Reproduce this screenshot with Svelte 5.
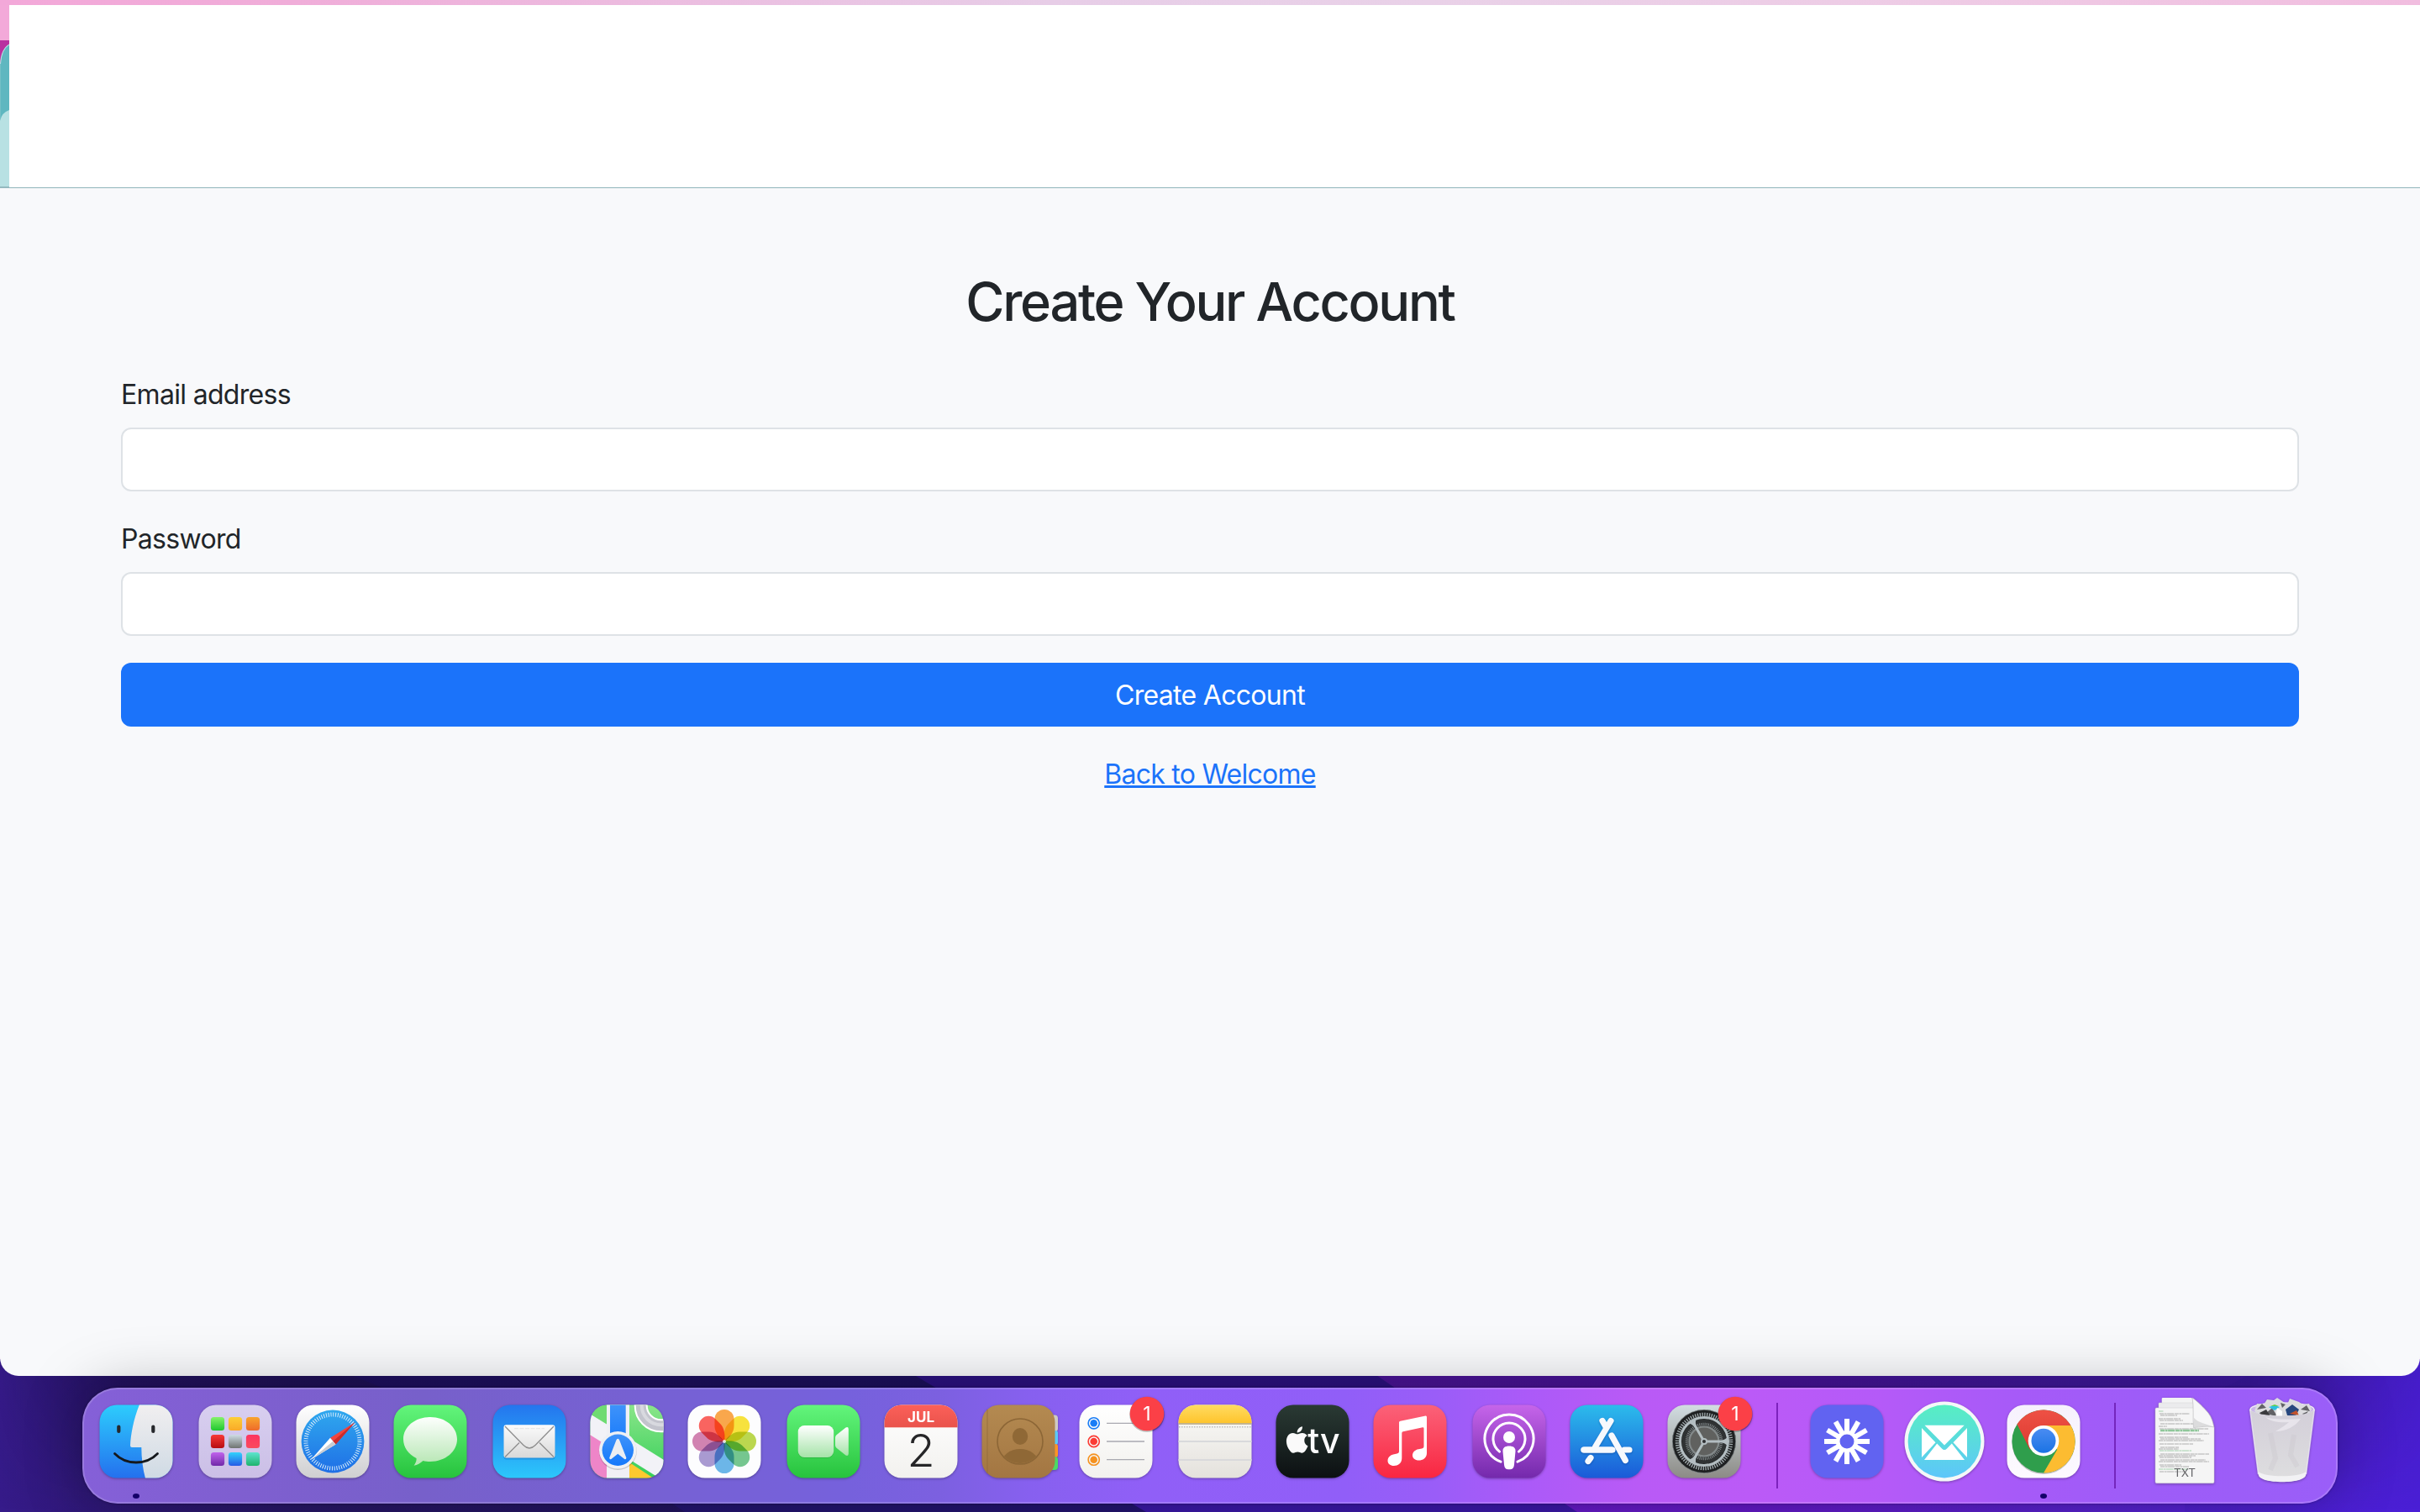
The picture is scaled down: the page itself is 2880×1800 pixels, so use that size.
<script>
  // wide: two extra pixels of spacing after the item
  const items = [
    { id: 'finder', wide: true, running: true },
    { id: 'launchpad' },
    { id: 'safari' },
    { id: 'messages', wide: true },
    { id: 'mail' },
    { id: 'maps' },
    { id: 'photos', wide: true },
    { id: 'facetime' },
    { id: 'calendar' },
    { id: 'contacts' },
    { id: 'reminders', wide: true, badge: 1 },
    { id: 'notes' },
    { id: 'tv' },
    { id: 'music', wide: true },
    { id: 'podcasts' },
    { id: 'appstore' },
    { id: 'settings', badge: 1 },
    { id: 'separator' },
    { id: 'loom' },
    { id: 'mailbird', wide: true },
    { id: 'chrome', running: true },
    { id: 'separator', narrow: true },
    { id: 'txt' },
    { id: 'trash' },
  ];

  const gradients = [
    ['blueFinder', '#2dcdfd', '#2470ee'], ['whiteFinder', '#f1eff0', '#cfdae4'],
    ['pad', '#d8cff0', '#cbbfe6'], ['safariBg', '#ffffff', '#cfcfd1'],
    ['safariDial', '#2fa8ee', '#1f6fe6'], ['green', '#63f57c', '#27c33d'],
    ['bubble', '#fdfffd', '#b5e6b2'], ['mailBg', '#2475ee', '#2cc7fb'],
    ['paper', '#fbfbfb', '#d9d9d9'], ['mapGreen', '#8be58a', '#35cf58'],
    ['mapBlue', '#3f93fa', '#1478fb'], ['camera', '#ffffff', '#a5e3a8'],
    ['calRed', '#fc605a', '#e9534b'], ['calBg', '#ffffff', '#f2f1ee'],
    ['leather', '#b48a51', '#a37642'], ['noteTop', '#ffdc63', '#fec42c'],
    ['noteBg', '#fcfcfa', '#e4e1dc'], ['tvBg', '#2a3a34', '#0c1012'],
    ['musicBg', '#fb6279', '#f92641'], ['podBg', '#c665ea', '#7429ac'],
    ['storeBg', '#2cbcec', '#1a5ad8'], ['setBg', '#d2dde2', '#8c8b86'],
    ['birdBg', '#57efc2', '#5dc6fa'], ['chromeBg', '#f6f1fd', '#fdfaff'],
    ['cRed', '#ee5145', '#dc3a30'], ['cBlue', '#4a8cf2', '#1a73e4'],
    ['p1', '#86f26b', '#1fc72f'], ['p2', '#fdcf38', '#f9a928'], ['p3', '#f8a52d', '#ee6a2b'],
    ['p4', '#f83a37', '#b60c12'], ['p5', '#cfdde5', '#6e7270'], ['p6', '#fd3560', '#f94a5e'],
    ['p7', '#c163ec', '#7029a8'], ['p8', '#30d3fc', '#2559e6'], ['p9', '#5ee4d0', '#1eb36c'],
    ['bin', '#d3cfd9', '#dededf'],
  ];

  const petals = ['#fb9a2e', '#f8e01e', '#b2d332', '#5fbf7e', '#55ace6', '#9d8bcb', '#cc70a5', '#fb4b46'];
  const spokes = [0, 30, 60, 90, 120, 150, 180, 210, 240, 270, 300, 330];
  const tiles = [-21, 0, 21].flatMap((y, r) => [-21, 0, 21].map((x, c) => ({ x, y, fill: `url(#p${r * 3 + c + 1})` })));
  const textLines = [
    [-36, 6], [-33, 36], [-31, 20], [-27, 26], [-25, 28], [-21, 44], [-18, 10], [-15, 58], [-13, 46],
    [-9, 60], [-5, 34], [-3, 48], [-1, 54], [3, 40], [7, 22], [9, 24], [11, 38], [15, 58], [17, 44],
    [19, 38], [22, 54], [24, 60], [28, 26], [30, 34], [33, 36], [36, 30],
  ];
</script>

<div class="screen">
  <svg class="defs" width="0" height="0" aria-hidden="true">
    <defs>
      {#each gradients as [id, a, b]}
        <linearGradient {id} x1="0" y1="0" x2="0" y2="1">
          <stop offset="0" stop-color={a} /><stop offset="1" stop-color={b} />
        </linearGradient>
      {/each}
      <clipPath id="tile"><rect x="-43.5" y="-43.5" width="87" height="87" rx="20.5" /></clipPath>
      <clipPath id="face"><circle cx="2" cy="0" r="26" /></clipPath>
    </defs>
  </svg>

  <svg class="wallpaper" viewBox="0 0 2880 182" aria-hidden="true">
    <defs>
      <linearGradient id="wl" x1="0" x2="1"><stop offset="0" stop-color="#361b8a" /><stop offset=".035" stop-color="#2f1878" /><stop offset=".12" stop-color="#281768" /><stop offset=".3" stop-color="#21145e" /></linearGradient>
      <linearGradient id="wr" gradientUnits="userSpaceOnUse" x1="1640" y1="0" x2="2880" y2="0"><stop offset="0" stop-color="#6a1cc9" /><stop offset=".35" stop-color="#6419c8" /><stop offset=".7" stop-color="#5722cf" /><stop offset="1" stop-color="#4e20dc" /></linearGradient>
      <linearGradient id="shade" x1="0" x2="0" y1="0" y2="1"><stop offset="0" stop-color="#100636" stop-opacity=".42" /><stop offset=".2" stop-color="#100636" stop-opacity=".34" /><stop offset="1" stop-color="#100636" stop-opacity="0" /></linearGradient>
      <linearGradient id="sides" x1="0" x2="1"><stop offset="0" stop-color="#222" /><stop offset=".05" stop-color="#fff" /><stop offset=".93" stop-color="#fff" /><stop offset="1" stop-color="#333" /></linearGradient>
      <mask id="sideFade"><rect width="2880" height="182" fill="url(#sides)" /></mask>
    </defs>
    <rect width="2880" height="182" fill="url(#wl)" />
    <path d="M420 20 800 172 815 182H2880V20Z" fill="#271680" opacity=".55" />
    <path d="M1056 0 1347 172 1364 182H2880V0Z" fill="#3b18a8" />
    <path d="M1610 0 1862 172 1877 182H2880V0Z" fill="url(#wr)" />
    <path d="M2700 0Q2670 30 2600 50V182H2880V0Z" fill="#3a1fc0" opacity=".2" />
    <rect width="2880" height="182" fill="url(#shade)" mask="url(#sideFade)" />
  </svg>

  <main class="window">
    <div class="banner">
      <svg class="sliver" viewBox="0 0 11 218" aria-hidden="true">
        <rect width="11" height="42" fill="#f3a9d9" />
        <rect y="42" width="11" height="40" fill="#b930a0" />
        <path d="M0 70Q1 52 11 46.500V218H0Z" fill="#b9e0e3" />
        <path d="M1 70Q2 53 11 47.500V218H1Z" fill="#5fb7c0" />
        <rect y="70" width="1" height="70" fill="#74bfc6" />
        <path d="M0 138Q2 128 11 125V218H0Z" fill="#b8e1e3" />
        <rect y="216" width="11" height="2" fill="#94b9bf" />
      </svg>
    </div>
    <form class="form" onsubmit={(e) => e.preventDefault()}>
      <h1>Create Your Account</h1>
      <label for="email">Email address</label>
      <input id="email" type="email" />
      <label for="password">Password</label>
      <input id="password" type="password" />
      <button type="submit">Create Account</button>
      <a href="#welcome">Back to Welcome</a>
    </form>
  </main>

  <nav class="dock">
    {#each items as item}
      {#if item.id === 'separator'}
        <div class="separator" class:narrow={item.narrow}></div>
      {:else}
        <div class="slot" class:wide={item.wide}>
          <svg class="icon" viewBox="-58 -58 116 116" aria-hidden="true">
            {#if item.id === 'finder'}
              <g clip-path="url(#tile)">
                <rect x="-44" y="-44" width="88" height="88" fill="url(#blueFinder)" />
                <path d="M4 -44C-3 -27 -6.500 -8 -7 5Q-7 7 -5 7H6.300C6.300 20 8 33 11 44H44V-44Z" fill="url(#whiteFinder)" />
              </g>
              <path d="M-20.700 -17.500V-12M20.300 -17.500V-12" stroke="#26282c" stroke-width="4.200" stroke-linecap="round" />
              <path d="M-25.500 14.500C-12 28.500 12 28.500 25.500 14.500" fill="none" stroke="#15181d" stroke-width="2.800" stroke-linecap="round" />
            {:else if item.id === 'launchpad'}
              <rect x="-43.500" y="-43.500" width="87" height="87" rx="20.500" fill="url(#pad)" />
              {#each tiles as t}
                <rect x={t.x - 8.1} y={t.y - 8.1} width="16.200" height="16.200" rx="3.500" fill={t.fill} />
              {/each}
            {:else if item.id === 'safari'}
              <rect x="-43.500" y="-43.500" width="87" height="87" rx="20.500" fill="url(#safariBg)" />
              <circle r="37.400" fill="url(#safariDial)" />
              <circle r="32" fill="none" stroke="#d8ecfb" stroke-width="5" stroke-dasharray="1 1.793" />
              <path d="M26.500 -22.800 -3 -4.300 3.500 3.500Z" fill="#f2443f" />
              <path d="M26.500 -22.800 0 0 3.500 3.500Z" fill="#c92c2c" />
              <path d="M-26 21.800 -3 -4.300 3.500 3.500Z" fill="#ffffff" />
              <path d="M-26 21.800 0 0 3.500 3.500Z" fill="#c9ccd2" />
            {:else if item.id === 'messages'}
              <rect x="-43.500" y="-43.500" width="87" height="87" rx="20.500" fill="url(#green)" />
              <path d="M0 -29C18 -29 32 -17.500 32 -2.700S18 24 0 24C-3 24 -6 23.600 -8.500 23 -12 26 -15 28.200 -19.500 28.700 -17.500 26 -16 23 -16.500 20 -26 15.500 -32 7 -32 -2.700 -32 -17.500 -18 -29 0 -29Z" fill="url(#bubble)" />
            {:else if item.id === 'mail'}
              <rect x="-43.500" y="-43.500" width="87" height="87" rx="20.500" fill="url(#mailBg)" />
              <rect x="-30.500" y="-19.500" width="61" height="39.500" rx="3" fill="#1b76c6" opacity=".45" transform="translate(0 1.500)" />
              <rect x="-30.500" y="-19.700" width="61" height="39.200" rx="3" fill="url(#paper)" />
              <path d="M-29 18.500-12 1.500M29 18.500 12 1.500M-29 -18-7 4.500Q0 11.500 7 4.500L29 -18" fill="none" stroke="#8e8e8e" stroke-width="1.300" />
              <path d="M-18 -15.300H18" stroke="#dcdcdc" stroke-width=".8" stroke-dasharray="5 1.500" />
            {:else if item.id === 'maps'}
              <g clip-path="url(#tile)">
                <rect x="-44" y="-44" width="88" height="88" fill="url(#mapGreen)" />
                <path d="M-44 -9-24 4V44H-44Z" fill="#ee85c8" />
                <path d="M-44 -33 44 22V47L-44 -8Z" fill="#f2f2f7" />
                <path d="M-44 -33-24 -21V-44H-44Z" fill="#6fdb72" />
                <rect x="-24" y="-44" width="27" height="88" fill="#f0f0f5" />
                <path d="M3 25 32 44H3Z" fill="#fdc92f" />
                <rect x="-20" y="-44" width="18.700" height="50" fill="url(#mapBlue)" />
                <circle cx="40.700" cy="-42.700" r="24" fill="none" stroke="#ffffff" stroke-width="16" />
                <circle cx="40.700" cy="-42.700" r="24" fill="none" stroke="#c3c4cd" stroke-width="12" />
                <circle cx="40.700" cy="-42.700" r="23" fill="none" stroke="#d8d9df" stroke-width="4" />
              </g>
              <circle cx="-10.700" cy="11.500" r="22.500" fill="#000000" opacity=".18" />
              <circle cx="-10.700" cy="10.300" r="22.300" fill="#eef0f4" />
              <circle cx="-10.700" cy="10.300" r="18.700" fill="url(#mapBlue)" />
              <path d="M-10.700 -3.300Q-9.300 -3.300 -8.800 -1.500L-.6 19.500Q-.8 22 -2.800 21L-10.700 14.800-18.600 21Q-20.600 22 -20.800 19.500L-12.600 -1.500Q-12.100 -3.300 -10.700 -3.300Z" fill="#eceef2" />
            {:else if item.id === 'photos'}
              <rect x="-43.500" y="-43.500" width="87" height="87" rx="20.500" fill="#fdfdfe" />
              {#each petals as color, i}
                <path class="petal" transform="rotate({i * 45})" d="M0 0C-7 -5 -11.500 -12 -11.500 -18V-26.500A11.500 11.500 0 0 1 11.500 -26.500V-18C11.500 -12 7 -5 0 0Z" fill={color} />
              {/each}
              <circle r="2" fill="#ffffff" opacity=".8" />
            {:else if item.id === 'facetime'}
              <rect x="-43.500" y="-43.500" width="87" height="87" rx="20.500" fill="url(#green)" />
              <rect x="-30.300" y="-18" width="42.500" height="38" rx="7.500" fill="#1c9a30" opacity=".4" />
              <rect x="-30.300" y="-19" width="42.500" height="38" rx="7.500" fill="url(#camera)" />
              <path d="M14 -4.500Q14 -6.500 15.500 -7.700L26.500 -16.500Q29.800 -18 29.800 -14.500V14.500Q29.800 18 26.500 16.500L15.500 7.700Q14 6.500 14 4.500Z" fill="url(#camera)" />
            {:else if item.id === 'calendar'}
              <g clip-path="url(#tile)">
                <rect x="-44" y="-44" width="88" height="88" fill="url(#calBg)" />
                <rect x="-44" y="-44" width="88" height="27.300" fill="url(#calRed)" />
              </g>
              <text class="month" x="0" y="-22.700">JUL</text>
              <text class="day" x="0" y="30.300">2</text>
            {:else if item.id === 'contacts'}
              <rect x="36" y="-31.500" width="11" height="20" rx="4" fill="#cfcac2" />
              <rect x="36" y="-13" width="11" height="17" rx="3" fill="#5ac8f8" />
              <rect x="36" y="3" width="11" height="16" rx="3" fill="#fd9426" />
              <rect x="36" y="18" width="11" height="16" rx="4" fill="#4cd964" />
              <rect x="-43.500" y="-43.500" width="87" height="87" rx="20.500" fill="url(#leather)" />
              <path d="M-37 -38V38" stroke="#8f6a3a" stroke-width="1.500" opacity=".5" />
              <circle cx="2" cy="0" r="27" fill="none" stroke="#8c6636" stroke-width="1.600" />
              <ellipse cx="2" cy="-6" rx="9.200" ry="10" fill="#8f6836" />
              <g clip-path="url(#face)"><ellipse cx="2" cy="26" rx="22" ry="17" fill="#8f6836" /></g>
            {:else if item.id === 'reminders'}
              <rect x="-43.500" y="-43.500" width="87" height="87" rx="20.500" fill="url(#calBg)" />
              {#each ['#1a7df6', '#fb3b34', '#f5921f'] as color, i}
                <circle cx="-26.300" cy={(i - 1) * 21.7} r="6.600" fill="none" stroke={color} stroke-width="1.600" />
                <circle cx="-26.300" cy={(i - 1) * 21.7} r="4.300" fill={color} />
                <path d="M-11 {(i - 1) * 21.7}H34" stroke="#a9a9b1" stroke-width="1.300" />
              {/each}
            {:else if item.id === 'notes'}
              <g clip-path="url(#tile)">
                <rect x="-44" y="-44" width="88" height="88" fill="url(#noteBg)" />
                <rect x="-44" y="-44" width="88" height="22.300" fill="url(#noteTop)" />
                <path d="M-44 -21H44" stroke="#b3a27a" stroke-width="1.600" />
                <path d="M-43 -17.300H43" stroke="#bdbdbd" stroke-width="1.500" stroke-dasharray="1.500 1.500" />
                <path d="M-44 0H44M-44 22H44" stroke="#d9d9dc" stroke-width="1.800" />
              </g>
            {:else if item.id === 'tv'}
              <rect x="-43.500" y="-43.500" width="87" height="87" rx="20.500" fill="url(#tvBg)" />
              <path transform="translate(-34 -17.700) scale(1.310)" fill="#fafafa" d="M12.152 6.896c-.948 0-2.415-1.078-3.960-1.040-2.040.027-3.910 1.183-4.961 3.014-2.117 3.675-.546 9.103 1.519 12.090 1.013 1.454 2.208 3.090 3.792 3.039 1.520-.065 2.090-.987 3.935-.987 1.831 0 2.350.987 3.960.948 1.637-.026 2.676-1.480 3.676-2.948 1.156-1.688 1.636-3.325 1.662-3.415-.039-.013-3.182-1.221-3.220-4.857-.026-3.040 2.480-4.494 2.597-4.559-1.429-2.090-3.623-2.324-4.390-2.376-2-.156-3.675 1.090-4.610 1.090zM15.530 3.830c.843-1.012 1.400-2.427 1.245-3.830-1.207.052-2.662.805-3.532 1.818-.78.896-1.454 2.338-1.273 3.714 1.338.104 2.715-.688 3.559-1.701" />
              <text class="tv" x="13.500" y="13.700">tv</text>
            {:else if item.id === 'music'}
              <rect x="-43.500" y="-43.500" width="87" height="87" rx="20.500" fill="url(#musicBg)" />
              <path d="M-13 -22.500Q-13 -24 -11.500 -24.300L18.500 -30.500Q20 -30.800 20 -29V14C20 20 15 22.500 10.500 22.500 6 22.500 3 20 3 16.500S6 10 10 9.300L14 8.500C16 8 16.500 7 16.500 5.500V-15.500Q16.500 -17 15 -16.700L-8.200 -11.800Q-9.700 -11.500 -9.700 -10V20C-9.700 26 -14.500 29 -19 29 -23.500 29 -26.500 26.500 -26.500 23S-24 16.500 -20 15.500L-15.500 14.500C-13.500 14 -13 13 -13 11.500Z" fill="#ffffff" />
            {:else if item.id === 'podcasts'}
              <rect x="-43.500" y="-43.500" width="87" height="87" rx="20.500" fill="url(#podBg)" />
              <path d="M-10 24.200A29 29 0 1 1 10 24.200M-11.500 12.100A19 19 0 1 1 11.500 12.100" fill="none" stroke="#ffffff" stroke-width="3" stroke-linecap="round" />
              <circle cy="-5" r="7" fill="#ffffff" />
              <path d="M0 5.500C5 5.500 7.800 7.500 7.500 12L6 27.500C5.500 32 4 33.300 0 33.300S-5.500 32 -6 27.500L-7.500 12C-7.800 7.500 -5 5.500 0 5.500Z" fill="#ffffff" />
            {:else if item.id === 'appstore'}
              <rect x="-43.500" y="-43.500" width="87" height="87" rx="20.500" fill="url(#storeBg)" />
              <g class="sticks">
                <path d="M-27 10H7M21 10H27" />
                <path d="M-5 -24.500-1 -17.500M6 -7 22.300 22.500" />
                <path d="M5 -24.500-13.500 6.500M-19 19.500-22 23.500" />
                <path d="M-27 10H6" />
              </g>
            {:else if item.id === 'settings'}
              <rect x="-43.500" y="-43.500" width="87" height="87" rx="20.500" fill="url(#setBg)" />
              <circle r="38" fill="#1e2021" />
              <circle r="37.700" fill="none" stroke="#a5adb0" stroke-width="1" opacity=".6" />
              <circle r="32" fill="none" stroke="#a3acaf" stroke-width="4.500" stroke-dasharray="1.300 1.493" />
              <circle r="26.500" fill="#2f3233" />
              <circle r="20.500" fill="none" stroke="#83898b" stroke-width="3.500" stroke-dasharray="1 1.147" />
              <circle r="17.500" fill="#60615f" stroke="#83898a" stroke-width="2.200" />
              <circle r="28.500" fill="none" stroke="#b3bdc1" stroke-width="3" />
              {#each [0, 120, 240] as a}
                <path transform="rotate({a})" d="M0 -1.500H20Q25 -1.500 28 -5.500V5.500Q25 1.500 20 1.500H0Z" fill="#b3bdc1" />
              {/each}
              <circle r="4" fill="#b3bdc1" />
              <circle r="2" fill="#2c2e30" />
            {:else if item.id === 'loom'}
              <rect x="-43.500" y="-43.500" width="87" height="87" rx="20.500" fill="#6163f1" />
              <circle r="10.800" fill="none" stroke="#ffffff" stroke-width="4.600" />
              {#each spokes as a}
                <rect transform="rotate({a})" x="-3" y="-27" width="6" height="16" fill="#ffffff" />
              {/each}
            {:else if item.id === 'mailbird'}
              <circle r="47.500" fill="#f4f8f8" />
              <circle r="43.400" fill="url(#birdBg)" />
              <path d="M-23.500 -19.300H23.700L0 4.500Z" fill="#ffffff" />
              <path d="M-27 -16-10.500 1.300-27 19ZM27 -16 10.500 1.300 27 19Z" fill="#ffffff" />
              <path d="M-24 22-8.800 2.500-3 8.500Q0 11.500 3 8.500L8.800 2.500 24 22Z" fill="#ffffff" />
            {:else if item.id === 'chrome'}
              <rect x="-43.500" y="-43.500" width="87" height="87" rx="20.500" fill="url(#chromeBg)" />
              <circle cy="1.500" r="37.500" fill="#000000" opacity=".22" />
              <circle r="37.600" fill="#2f9e4c" />
              <path d="M0 -19H32.400A37.600 37.600 0 0 1 0 37.600L16.300 9.500 0 0Z" fill="#fcbc31" />
              <path d="M-31.500 -20.500A37.600 37.600 0 0 1 32.400 -19H0V0L-16.300 9.500Z" fill="url(#cRed)" />
              <circle cy="-.8" r="18.300" fill="#ffffff" />
              <circle cy="-.8" r="14.500" fill="url(#cBlue)" />
            {:else if item.id === 'txt'}
              <path d="M-27.300 -51Q-27.300 -52 -26 -52H8L28 -33V40H-27.300Z" fill="#f3f3f4" />
              <path d="M-31 -45Q-31 -46 -30 -46H10L31 -28V44H-31Z" fill="#ebebed" stroke="#d2d2d4" stroke-width=".5" />
              <path d="M-35 -38.500Q-35 -40 -33.500 -40H10L35 -17V48Q35 49.700 33.500 49.700H-33.500Q-35 49.700 -35 48Z" fill="#f5f5f5" stroke="#cfcfd1" stroke-width=".5" />
              {#each textLines as [y, w], i}
                <path d="M{-31 + (i % 3)} {y}h{Math.min(w, 62)}" stroke={i % 8 === 0 ? '#8fc79a' : '#9c9c9c'} stroke-width={i === 8 ? 2.4 : 0.8} stroke-dasharray="5 .6 3 .5 8 .7" />
              {/each}
              <path d="M9 -52C14 -49 24 -39 28 -34 32 -29 34 -22 34.800 -17 28 -19 18 -17 10.500 -16.500 9.500 -28 11 -42 9 -52Z" fill="#f7f7f8" stroke="#bdbdbf" stroke-width=".7" />
              <path d="M10.500 -16.500C18 -18 28 -19 34.800 -17 26 -21 16 -22 11 -28Z" fill="#c9c9cb" opacity=".6" />
              <text class="txt" x="0" y="41.700">TXT</text>
            {:else if item.id === 'trash'}
              <ellipse cy="-38" rx="38" ry="8" fill="#c9b6e8" stroke="#efeaf5" stroke-width="1.500" />
              <path d="M-33 -36-30 -45-22 -44-18 -50-10 -49-6 -52 0 -48 6 -44 9 -51 20 -47 24 -44 32 -45 35 -38 28 -28H-24Z" fill="#dcdcdf" />
              <path d="M-30 -38-24 -45-19 -40ZM-20 -33-12 -40-6 -30ZM22 -38 29 -43 33 -36ZM-2 -46 4 -44 0 -40ZM24 -33 31 -36 27 -30Z" fill="#626266" />
              <path d="M-16 -41-9 -43-3 -41-9 -37Z" fill="#2dbfe0" />
              <path d="M-14 -42-9 -44-4 -42Z" fill="#5fce4f" />
              <path d="M4 -38 12 -44 20 -38 16 -30 6 -31Z" fill="#28477e" />
              <path d="M9 -33 17 -37 20 -31Z" fill="#c2532d" />
              <path d="M-27 -34-19 -38-14 -30H-24Z" fill="#3a3a3d" />
              <path d="M-6 -40 0 -36V-28H-8Z" fill="#ffffff" />
              <path d="M-38.400 -38C-30 -28 30 -28 38.400 -38L28.500 39C27 51 -27 51 -28.500 39Z" fill="url(#bin)" />
              <path d="M-20 -29C-10 -26 8 -26 22 -27 16 -18 4 -12 -8 -12 -2 -16 4 -19 8 -23 0 -22 -14 -23 -20 -29Z" fill="#ebe9ef" opacity=".8" />
              <path d="M-28.500 36C-20 43 20 43 28.500 36L28 40C27 51 -27 51 -28 40Z" fill="#f2f2f4" />
              <path d="M-38.400 -38-28.500 39M38.400 -38 28.500 39" stroke="#f4f2f8" stroke-width="1.500" opacity=".7" />
              <path d="M-14 -10-8 20-14 34M14 -8 10 16 18 30" fill="none" stroke="#c6c4ca" stroke-width="6" opacity=".3" />
            {/if}
            {#if item.badge}
              <circle cx="37" cy="-32" r="20.800" fill="#000000" opacity=".25" />
              <circle cx="37" cy="-33" r="20.300" fill="#fb4047" />
              <text class="count" x="37" y="-24.800">{item.badge}</text>
            {/if}
          </svg>
          {#if item.running}<span class="dot"></span>{/if}
        </div>
      {/if}
    {/each}
  </nav>
</div>

<style>
  :global(body) { margin: 0; overflow: hidden; }
  .screen {
    position: relative;
    width: 2880px;
    height: 1800px;
    overflow: hidden;
    box-sizing: border-box;
    padding-top: 6px;
    display: flex;
    flex-direction: column;
    background: linear-gradient(90deg, #f3a8d9 0, #f0add9 350px, #e7cde7 1250px, #e9d1e8 1700px, #eecbe5 2300px, #f1bddf 2880px);
    font-family: Inter, "Liberation Sans", sans-serif;
    color: #212529;
  }
  .defs { position: absolute; }
  .wallpaper { position: absolute; left: 0; bottom: 0; width: 2880px; height: 182px; }
  .window {
    position: relative;
    height: 1632px;
    box-sizing: border-box;
    border-radius: 0 0 22px 22px;
    background: #f8f9fb;
    overflow: hidden;
    flex: none;
  }
  .banner { display: flex; height: 218px; box-sizing: border-box; background: linear-gradient(#fff 217px, #90b5bb 217px); }
  .sliver { width: 11px; height: 218px; }
  .form { display: flex; flex-direction: column; padding: 97px 144px 0; }
  h1 { margin: 0 0 48px; font-size: 63px; line-height: 77px; font-weight: 500; letter-spacing: -2.3px; text-align: center; }
  label { font-size: 32px; line-height: 48px; letter-spacing: -0.68px; margin-bottom: 15px; }
  input {
    height: 76px;
    box-sizing: border-box;
    border: 2px solid #dee2e6;
    border-radius: 12px;
    background: #fff;
    margin: 0 0 33px;
    padding: 0 24px;
    font-size: 32px;
  }
  button {
    height: 76px;
    border: 0;
    border-radius: 12px;
    background: #1b73fa;
    color: #fff;
    font: inherit;
    font-size: 32px;
    letter-spacing: -0.7px;
    padding: 1px 0 0;
    margin: -1px 0 33px;
  }
  a { align-self: center; font-size: 32px; line-height: 48px; letter-spacing: -0.74px; color: #1b73fa; text-decoration-thickness: 3px; text-underline-offset: 2px; }
  .dock {
    position: relative;
    margin: 14px 0 0 98px;
    width: 2684px;
    height: 138px;
    box-sizing: border-box;
    padding: 4px;
    display: flex;
    flex: none;
    border: 2px solid rgba(255, 255, 255, 0.17);
    border-radius: 42px;
    background: linear-gradient(90deg, #8560d8 0, #7f5fd0 7%, #7760ca 15%, #7661d3 25%, #7661dc 34%, #7c60e0 38%, #8760ef 42%, #905ff7 47%, #915ef8 56%, #9a5df8 60%, #ab5af8 64%, #b95af6 69%, #bb5af7 74%, #b45af8 80%, #a65af8 86%, #9e5cf8 91%, #9a5ef8 100%) border-box;
    box-shadow: 0 0 3px rgba(0, 0, 0, 0.35), 0 0 76px -10px rgba(0, 0, 0, 0.36);
  }
  .slot { width: 116px; flex: none; display: flex; flex-direction: column; align-items: center; gap: 4px; }
  .wide { margin-right: 2px; }
  .icon { width: 116px; height: 116px; flex: none; overflow: visible; filter: drop-shadow(0 1px 1.5px rgba(0, 0, 0, 0.3)); isolation: isolate; }
  .dot { width: 8px; height: 8px; border-radius: 50%; background: #14006a; }
  .separator { width: 2px; height: 102px; margin: 12px 24px 0 28px; flex: none; background: #7d22bd; }
  .separator.narrow { margin: 12px 24px 0 26px; background: #7426bd; }
  .petal { mix-blend-mode: multiply; opacity: 0.86; }
  .month { font-size: 17px; font-weight: 700; fill: #fff; text-anchor: middle; }
  .day { font-size: 54px; font-weight: 300; fill: #262628; text-anchor: middle; }
  .tv { font-size: 41px; font-weight: 500; fill: #fafafa; text-anchor: middle; }
  .txt { font-size: 13.500px; fill: #636366; text-anchor: middle; }
  .count { font-size: 23px; fill: #fff; text-anchor: middle; }
  .sticks { fill: none; stroke: #f6f9fd; stroke-width: 7.200px; stroke-linecap: round; filter: drop-shadow(0 1px 1px rgba(0, 40, 120, 0.4)); }
</style>
